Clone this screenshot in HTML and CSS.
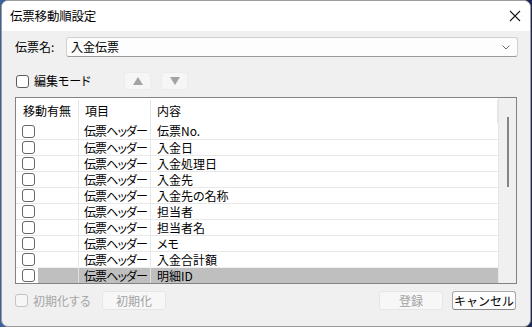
FILE: index.html
```html
<!DOCTYPE html>
<html lang="ja">
<head>
    <meta charset="UTF-8">
    <title>伝票移動順設定</title>
    <link rel="stylesheet" href="styles.css">
</head>
<body>
    <div class="window">
        <div class="titlebar">
            <span class="title">伝票移動順設定</span>
            <svg class="close" width="12" height="12" viewBox="0 0 12 12">
                <path d="M1 1L11 11M11 1L1 11" stroke="#1a1a1a" stroke-width="1.1" fill="none"/>
            </svg>
        </div>

        <div class="content">
            <div class="name-row">
                <label class="name-label">伝票名:</label>
                <div class="combo">
                    <span>入金伝票</span>
                    <svg width="8" height="5" viewBox="0 0 8 5">
                        <path d="M0.5 0.5L4 4L7.5 0.5" stroke="#6a6a6a" stroke-width="1" fill="none"/>
                    </svg>
                </div>
            </div>

            <div class="tool-row">
                <label class="check"><span class="box"></span>編集モード</label>
                <button class="arrow-btn">
                    <svg width="10" height="8" viewBox="0 0 10 8"><path d="M5 0L10 8H0Z" fill="#a3a3a3"/></svg>
                </button>
                <button class="arrow-btn">
                    <svg width="10" height="8" viewBox="0 0 10 8"><path d="M0 0H10L5 8Z" fill="#a3a3a3"/></svg>
                </button>
            </div>

            <!-- 移動順リスト -->
            <div class="grid">
                <div class="list">
                    <div class="head">
                        <div class="hcell">移動有無</div>
                        <div class="hcell">項目</div>
                        <div class="hcell">内容</div>
                    </div>
                    <div class="row"><div class="cell"><span class="box"></span></div><div class="cell">伝票ヘッダー</div><div class="cell">伝票No.</div></div>
                    <div class="row"><div class="cell"><span class="box"></span></div><div class="cell">伝票ヘッダー</div><div class="cell">入金日</div></div>
                    <div class="row"><div class="cell"><span class="box"></span></div><div class="cell">伝票ヘッダー</div><div class="cell">入金処理日</div></div>
                    <div class="row"><div class="cell"><span class="box"></span></div><div class="cell">伝票ヘッダー</div><div class="cell">入金先</div></div>
                    <div class="row"><div class="cell"><span class="box"></span></div><div class="cell">伝票ヘッダー</div><div class="cell">入金先の名称</div></div>
                    <div class="row"><div class="cell"><span class="box"></span></div><div class="cell">伝票ヘッダー</div><div class="cell">担当者</div></div>
                    <div class="row"><div class="cell"><span class="box"></span></div><div class="cell">伝票ヘッダー</div><div class="cell">担当者名</div></div>
                    <div class="row"><div class="cell"><span class="box"></span></div><div class="cell">伝票ヘッダー</div><div class="cell">メモ</div></div>
                    <div class="row"><div class="cell"><span class="box"></span></div><div class="cell">伝票ヘッダー</div><div class="cell">入金合計額</div></div>
                    <div class="row selected"><div class="cell"><span class="box"></span><span class="fill"></span></div><div class="cell">伝票ヘッダー</div><div class="cell">明細ID</div></div>
                </div>
                <div class="vscroll"><div class="thumb"></div></div>
            </div>

            <div class="footer">
                <label class="check disabled"><span class="box"></span>初期化する</label>
                <button class="btn reset-btn" disabled>初期化</button>
                <div class="spacer"></div>
                <button class="btn" disabled>登録</button>
                <button class="btn cancel-btn">キャンセル</button>
            </div>
        </div>
    </div>
</body>
</html>
```

FILE: styles.css
```css
body {
    margin: 0;
    width: 532px;
    height: 327px;
    overflow: hidden;
    background: linear-gradient(to right, #3f5f9f, #1a2655);
    font-family: "Noto Sans CJK JP", "Noto Sans", sans-serif;
    font-size: 12px;
    color: #000;
    font-feature-settings: "palt";
}
.window {
    margin-left: 1px;
    width: 530px;
    height: 327px;
    box-sizing: border-box;
    border: 1px solid #9c9c9c;
    border-radius: 7px;
    background-color: #f0f0f0;
    overflow: hidden;
}
.titlebar {
    height: 30px;
    background-color: #fff;
    display: flex;
    align-items: center;
    justify-content: space-between;
    padding: 0 8px 0 8px;
}
.title {
    font-size: 12.5px;
    line-height: 14px;
    letter-spacing: -0.2px;
}
.close {
    margin-right: 1px;
}
.content {
    padding: 0 13px;
}
/* 伝票名 */
.name-row {
    display: flex;
    align-items: center;
    margin-top: 6px;
    height: 20px;
}
.name-label {
    width: 51px;
    flex-shrink: 0;
    line-height: 14px;
}
.combo {
    flex: 1;
    height: 20px;
    box-sizing: border-box;
    margin-right: -1px;
    background-color: #fdfdfd;
    border: 1px solid #d0d0d0;
    border-bottom-color: #9a9a9a;
    border-radius: 3px;
    display: flex;
    align-items: center;
    justify-content: space-between;
    padding: 0 7px 0 4px;
    line-height: 14px;
}
/* チェックボックス */
.check {
    display: flex;
    align-items: center;
    gap: 5px;
    line-height: 14px;
}
.box {
    display: inline-block;
    width: 13px;
    height: 13px;
    box-sizing: border-box;
    border: 1px solid #5c5c5c;
    border-radius: 3px;
    background-color: #fff;
    flex-shrink: 0;
}
.check.disabled {
    color: #a6a6a6;
}
.check.disabled .box {
    border-color: #c4c4c4;
    background-color: #f6f6f6;
}
.tool-row {
    display: flex;
    align-items: center;
    margin-top: 15px;
    height: 18px;
}
.tool-row .check {
    width: 108px;
    margin-left: 1px;
}
.arrow-btn {
    width: 27px;
    height: 18px;
    margin-right: 10px;
    padding: 0;
    border: 1px solid #ececec;
    border-radius: 3px;
    background-color: #f6f6f6;
    display: flex;
    align-items: center;
    justify-content: center;
}
/* リスト */
.grid {
    margin-top: 7px;
    height: 187px;
    box-sizing: border-box;
    border: 1px solid #828282;
    display: flex;
    background-color: #fff;
}
.list {
    flex: 1;
    overflow: hidden;
}
.head,
.row {
    display: grid;
    grid-template-columns: 63px 72px 1fr;
}
.head {
    height: 25px;
}
.hcell {
    padding-left: 6px;
    border-right: 1px solid #e5e5e5;
    margin-top: 2px;
    line-height: 21px;
}
.hcell:first-child {
    padding-left: 7px;
}
.row {
    height: 16px;
    box-sizing: border-box;
    border-top: 1px solid #e8e8e8;
}
.head + .row {
    border-top: none;
}
.cell {
    padding-left: 6px;
    line-height: 15px;
    border-right: 1px solid #e8e8e8;
    white-space: nowrap;
    overflow: hidden;
}
.cell:nth-child(2) {
    padding-left: 5px;
    letter-spacing: -0.9px;
}
.cell:last-child {
    border-right: none;
}
.row .cell:first-child {
    display: flex;
    align-items: center;
}
.row .box {
    border-color: #666;
}
.fill {
    flex: 1;
    align-self: stretch;
    margin-left: 3px;
}
.row.selected {
    border-top-color: #f0f0f0;
}
.row.selected .fill,
.row.selected .cell:not(:first-child) {
    background-color: #bfbfbf;
}
.row.selected .cell {
    border-right-color: #e0e0e0;
}
.vscroll {
    width: 18px;
    flex-shrink: 0;
    background-color: #f0f0f0;
    border-left: 1px solid #e6e6e6;
    box-sizing: border-box;
    padding-top: 19px;
    display: flex;
    justify-content: center;
}
.thumb {
    width: 2px;
    height: 70px;
    background-color: #858585;
}
/* 下部ボタン */
.footer {
    display: flex;
    align-items: center;
    margin-top: 7px;
    height: 19px;
}
.footer .check {
    width: 87px;
}
.btn {
    width: 64px;
    height: 19px;
    padding: 0;
    font-family: inherit;
    font-size: 12px;
    line-height: 14px;
    border: 1px solid #e6e6e6;
    border-radius: 3px;
    background-color: #f7f7f7;
    color: #a3a3a3;
}
.spacer {
    flex: 1;
}
.cancel-btn {
    margin-left: 9px;
    margin-right: 1px;
    color: #000;
    background-color: #fdfdfd;
    border-color: #a9a9a9;
    border-bottom-color: #8a8a8a;
}
```
